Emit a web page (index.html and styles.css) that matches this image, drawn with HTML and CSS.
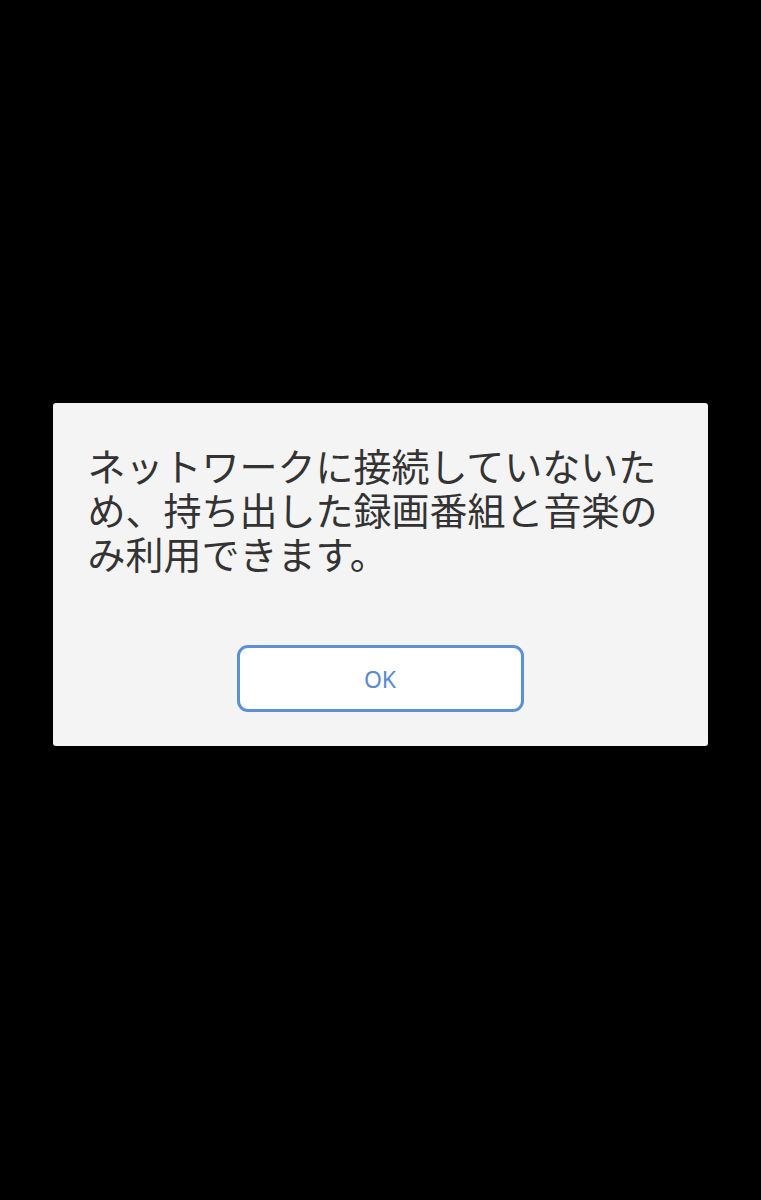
FILE: index.html
```html
<!DOCTYPE html>
<html lang="ja">
<head>
<meta charset="utf-8">
<link rel="stylesheet" href="styles.css">
</head>
<body>
<div class="screen">
  <div class="dialog">
    <p class="message">ネットワークに接続していないため、持ち出した録画番組と音楽のみ利用できます。</p>
    <div class="actions">
      <button class="ok">OK</button>
    </div>
  </div>
</div>
</body>
</html>
```

FILE: styles.css
```css
html, body {
  margin: 0;
  padding: 0;
  background: #000;
}
.screen {
  width: 761px;
  height: 1200px;
  display: flex;
  flex-direction: column;
  align-items: center;
  padding-top: 403px;
  box-sizing: border-box;
}
.dialog {
  width: 655px;
  height: 343px;
  box-sizing: border-box;
  margin-left: -1px;
  background: #f4f4f4;
  border-radius: 3px;
  padding: 40px 35px 34px 35px;
  display: flex;
  flex-direction: column;
}
.message {
  margin: 0;
  font-family: "Noto Sans CJK JP", "Noto Sans", sans-serif;
  font-size: 38px;
  line-height: 44px;
  color: #333;
  letter-spacing: 0;
}
.actions {
  margin-top: auto;
  display: flex;
  justify-content: center;
}
.ok {
  width: 287px;
  height: 67px;
  box-sizing: border-box;
  background: #fff;
  border: 3.5px solid #5b8fd8;
  border-radius: 11px;
  color: #5b8ad0;
  font-family: "Noto Sans", "Noto Sans CJK JP", sans-serif;
  font-size: 23px;
  padding: 0;
}
```
